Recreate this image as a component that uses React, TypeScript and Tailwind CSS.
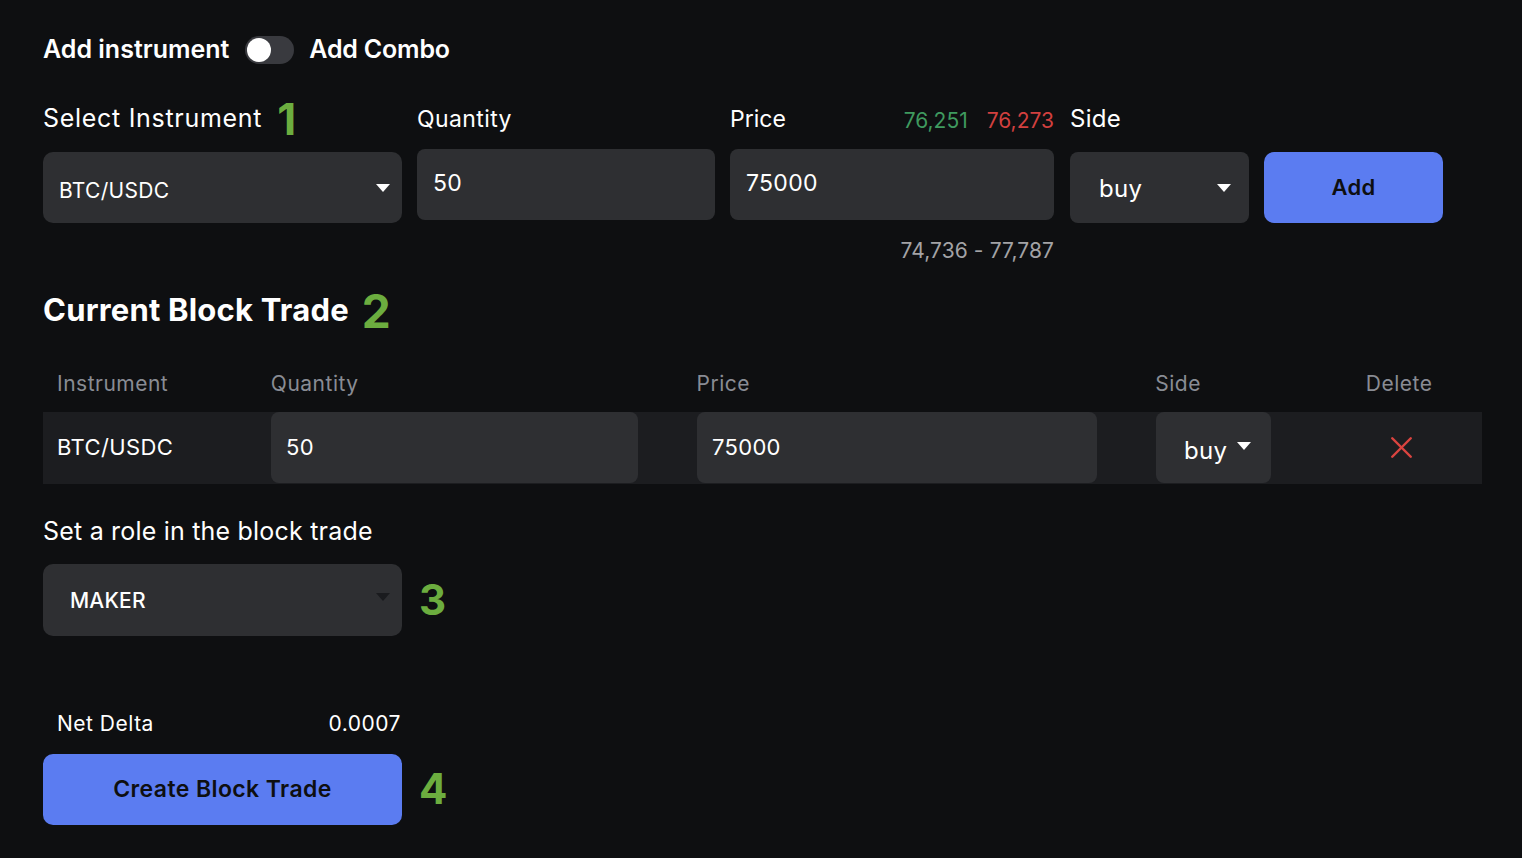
import { X } from 'lucide-react';

const Caret = ({ className = 'fill-white' }: { className?: string }) => (
  <svg width="14" height="8" viewBox="0 0 14 8" className={className}>
    <path d="M0 0h14L7 8z" />
  </svg>
);

const Step = ({ n, className = '' }: { n: string; className?: string }) => (
  <span className={`font-bold text-[#6cad3f] leading-none ${className}`}>{n}</span>
);

export default function App() {
  return (
    <div
      className="min-h-[858px] w-full bg-[#0e0f11] px-[43px] pt-[36px] text-white"
      style={{ fontFamily: 'Inter, "Liberation Sans", sans-serif' }}
    >
      {/* Toggle row */}
      <div className="flex h-[28px] items-center">
        <span className="text-[25px] font-semibold tracking-[0px]">Add instrument</span>
        <div className="ml-[16px] flex h-[28px] w-[49px] items-center rounded-full bg-[#393a3f] px-[2px]">
          <div className="h-[24px] w-[24px] rounded-full bg-white" />
        </div>
        <span className="ml-[15px] text-[25px] font-semibold tracking-[-0.2px]">Add Combo</span>
      </div>

      {/* Form row */}
      <div className="mt-[35px] flex gap-[15px]">
        <div className="w-[359px]">
          <div className="flex h-[40px] items-center gap-[15px]">
            <span className="text-[25px] tracking-[0.7px]">Select Instrument</span>
            <Step n="1" className="text-[44px]" />
          </div>
          <div className="mt-[13px] flex h-[71px] items-center justify-between rounded-[10px] bg-[#2e2f32] pl-[16px] pr-[12px]">
            <span className="pt-[6px] text-[21px] tracking-[0.3px]">BTC/USDC</span>
            <Caret />
          </div>
        </div>
        <div className="w-[298px]">
          <div className="flex h-[40px] items-center text-[23px] tracking-[0.4px]">Quantity</div>
          <div className="mt-[10px] flex h-[71px] items-center rounded-[8px] bg-[#2e2f32] px-[16px] pb-[2px] text-[23px] tracking-[0.3px]">
            50
          </div>
        </div>
        <div className="w-[324px]">
          <div className="flex h-[40px] items-center justify-between">
            <span className="text-[23px]">Price</span>
            <span className="flex gap-[19px] pt-[4px] text-[21px]">
              <span className="text-[#3f9a5f]">76,251</span>
              <span className="text-[#d2403f]">76,273</span>
            </span>
          </div>
          <div className="mt-[10px] flex h-[71px] items-center rounded-[8px] bg-[#2e2f32] px-[16px] pb-[2px] text-[23px] tracking-[0.3px]">
            75000
          </div>
          <div className="mt-[15px] text-right text-[21px] tracking-[0.1px] text-[#a3a3a6]">74,736 - 77,787</div>
        </div>
        <div className="ml-px w-[179px]">
          <div className="flex h-[40px] items-center text-[24px] tracking-[0.3px]">Side</div>
          <div className="mt-[13px] flex h-[71px] items-center justify-between rounded-[8px] bg-[#2e2f32] pl-[29px] pr-[18px]">
            <span className="pt-[2px] text-[24px] tracking-[0.3px]">buy</span>
            <Caret />
          </div>
        </div>
        <div className="w-[179px] pt-[53px]">
          <button className="flex h-[71px] w-full items-center justify-center rounded-[10px] bg-[#5b7cf1] text-[22px] font-semibold tracking-[0.3px] text-[#0e0f11]">
            Add
          </button>
        </div>
      </div>

      {/* Current Block Trade */}
      <div className="mt-[24px] flex h-[40px] items-center gap-[13px]">
        <h2 className="text-[31px] font-bold tracking-[0.2px]">Current Block Trade</h2>
        <Step n="2" className="text-[46px]" />
      </div>

      <div className="mt-[39px] flex h-[28px] items-center text-[21px] tracking-[0.5px] text-[#898c94]">
        <div className="w-[228px] pl-[14px]">Instrument</div>
        <div className="w-[426px]">Quantity</div>
        <div className="w-[459px]">Price</div>
        <div className="w-[164px]">Side</div>
        <div className="w-[160px] text-center">Delete</div>
      </div>

      <div className="mt-[14px] flex h-[72px] w-[1439px] items-center bg-[#1c1d20]">
        <div className="w-[228px] pl-[14px] text-[22px] tracking-[0.4px]">BTC/USDC</div>
        <div className="w-[426px]">
          <div className="flex h-[71px] w-[367px] items-center rounded-[8px] bg-[#2e2f32] px-[15px] text-[22px] tracking-[0.3px]">
            50
          </div>
        </div>
        <div className="w-[459px]">
          <div className="flex h-[71px] w-[400px] items-center rounded-[8px] bg-[#2e2f32] px-[15px] text-[22px] tracking-[0.3px]">
            75000
          </div>
        </div>
        <div className="w-[164px]">
          <div className="flex h-[71px] w-[115px] items-center gap-[10px] rounded-[8px] bg-[#2e2f32] pl-[28px] pt-[6px]">
            <span className="text-[24px] tracking-[0.3px]">buy</span>
            <span className="pb-[10px]">
              <Caret />
            </span>
          </div>
        </div>
        <div className="flex w-[162px] justify-center">
          <X className="h-[37px] w-[37px] text-[#db4440]" strokeWidth={1.6} />
        </div>
      </div>

      {/* Role */}
      <div className="mt-[34px] flex h-[28px] items-center text-[25px] tracking-[0.2px]">Set a role in the block trade</div>
      <div className="mt-[18px] flex items-center gap-[17px]">
        <div className="flex h-[72px] w-[359px] items-center justify-between rounded-[10px] bg-[#2e2f32] pl-[27px] pr-[12px]">
          <span className="pt-[2px] text-[21px] font-medium tracking-[0.2px]">MAKER</span>
          <span className="pb-[6px]">
            <Caret className="fill-[#1a1b1e]" />
          </span>
        </div>
        <Step n="3" className="text-[42px]" />
      </div>

      {/* Net delta */}
      <div className="mt-[74px] flex h-[28px] w-[359px] items-center justify-between pl-[14px] pr-px text-[21px] tracking-[0.5px]">
        <span>Net Delta</span>
        <span>0.0007</span>
      </div>
      <div className="mt-[16px] flex items-center gap-[17px]">
        <button className="flex h-[71px] w-[359px] items-center justify-center rounded-[10px] bg-[#5b7cf1] text-[23px] font-semibold tracking-[0.4px] text-[#0e0f11]">
          Create Block Trade
        </button>
        <Step n="4" className="text-[42px]" />
      </div>
    </div>
  );
}
